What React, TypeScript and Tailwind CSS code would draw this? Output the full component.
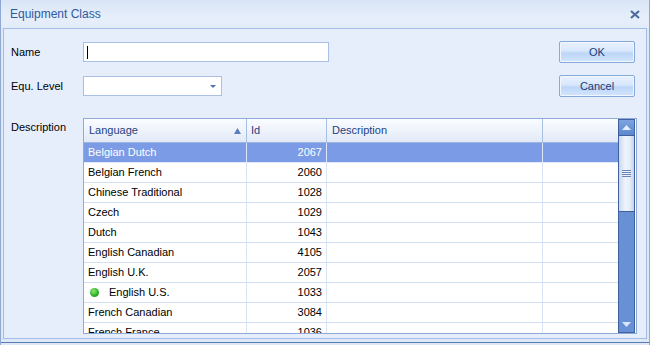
import React from "react";

const rows: { lang: string; id: string; dot?: boolean }[] = [
  { lang: "Belgian Dutch", id: "2067" },
  { lang: "Belgian French", id: "2060" },
  { lang: "Chinese Traditional", id: "1028" },
  { lang: "Czech", id: "1029" },
  { lang: "Dutch", id: "1043" },
  { lang: "English Canadian", id: "4105" },
  { lang: "English U.K.", id: "2057" },
  { lang: "English U.S.", id: "1033", dot: true },
  { lang: "French Canadian", id: "3084" },
  { lang: "French France", id: "1036" },
];

const font = { fontFamily: '"Liberation Sans", Arial, sans-serif' };

function Btn({ label }: { label: string }) {
  return (
    <div className="w-[76px] h-[22px] rounded-[2px] border border-[#86a9dc] bg-[linear-gradient(to_bottom,#e9f2fe_0%,#d7e7fc_45%,#bcd6f7_55%,#d3e5fc_100%)] flex items-center justify-center text-[11px] text-[#1b3b78] shadow-[inset_0_0_0_1px_#f2f7ff]">
      {label}
    </div>
  );
}

export default function App() {
  return (
    <div
      className="w-[650px] h-[345px] flex flex-col bg-[#dde7f6] border-l border-r border-[#8fa9d4] overflow-hidden"
      style={font}
    >
      {/* title bar */}
      <div className="h-[28px] shrink-0 flex items-center justify-between pl-[9px] pr-[9px] bg-[linear-gradient(to_bottom,#d9e5f6,#e6eefa_60%,#e3ecf9)]">
        <span className="text-[12px] text-[#2d5aa0]">Equipment Class</span>
        <svg width="10" height="9" viewBox="0 0 10 9">
          <path d="M1 1 L9 8 M9 1 L1 8" stroke="#4f6d9c" strokeWidth="2.2" />
        </svg>
      </div>
      {/* body panel */}
      <div className="h-[311px] shrink-0 mx-[2px] border border-[#a3bde6] bg-[#e7eefb] flex flex-col pl-[7px] pr-[8px] pt-[12px] text-[11px] text-black">
        <div className="flex items-center h-[22px]">
          <div className="w-[72px]">Name</div>
          <div className="w-[246px] h-[20px] bg-white border border-[#a9bfe3] flex items-center pl-[3px]">
            <div className="w-px h-[13px] bg-black" />
          </div>
          <div className="ml-auto mr-[3px]">
            <Btn label="OK" />
          </div>
        </div>
        <div className="flex items-center h-[22px] mt-[12px]">
          <div className="w-[72px]">Equ. Level</div>
          <div className="w-[139px] h-[20px] bg-white border border-[#a9bfe3] flex items-center justify-end pr-[5px]">
            <svg width="6" height="3" viewBox="0 0 6 3">
              <path d="M0 0 H6 L3 3 Z" fill="#4f74b8" />
            </svg>
          </div>
          <div className="ml-auto mr-[3px]">
            <Btn label="Cancel" />
          </div>
        </div>
        <div className="flex mt-[21px]">
          <div className="w-[72px] pt-[1px]">Description</div>
          {/* grid */}
          <div className="w-[554px] h-[216px] border border-[#8eaad8] bg-white flex overflow-hidden">
            <div className="flex-1 flex flex-col overflow-hidden">
              {/* header */}
              <div className="h-[24px] shrink-0 flex border-b border-[#9db7df] bg-[linear-gradient(to_bottom,#fafcff,#eef3fb_50%,#e2eaf7)] text-[#1d3f80]">
                <div className="w-[163px] shrink-0 border-r border-[#a7bfe4] flex items-center justify-between pl-[5px] pr-[5px]">
                  <span>Language</span>
                  <svg width="7" height="6" viewBox="0 0 7 6">
                    <path d="M3.5 0 L7 6 H0 Z" fill="#5b7dbd" />
                  </svg>
                </div>
                <div className="w-[80px] shrink-0 border-r border-[#a7bfe4] flex items-center pl-[4px]">Id</div>
                <div className="w-[216px] shrink-0 border-r border-[#a7bfe4] flex items-center pl-[5px]">Description</div>
                <div className="flex-1" />
              </div>
              {rows.map((r, i) => {
                const sel = i === 0;
                return (
                  <div
                    key={r.lang}
                    className={`h-[20px] shrink-0 flex border-b ${sel ? "bg-[#7c9be6] text-white border-[#e3ebf9]" : "border-[#d3e0f4]"}`}
                  >
                    <div className={`w-[163px] shrink-0 border-r flex items-center pl-[4px] ${sel ? "border-[#dfe8f8]" : "border-[#d9e5f6]"}`}>
                      {r.dot && (
                        <span className="w-[9px] h-[9px] rounded-full bg-[radial-gradient(circle_at_40%_35%,#8ee86a,#2fb22a_55%,#167d16)] ml-[2px] mr-[10px]" />
                      )}
                      <span>{r.lang}</span>
                    </div>
                    <div className={`w-[80px] shrink-0 border-r flex items-center justify-end pr-[4px] ${sel ? "border-[#dfe8f8]" : "border-[#d9e5f6]"}`}>
                      {r.id}
                    </div>
                    <div className={`w-[216px] shrink-0 border-r ${sel ? "border-[#dfe8f8]" : "border-[#d9e5f6]"}`} />
                    <div className="flex-1" />
                  </div>
                );
              })}
            </div>
            {/* scrollbar */}
            <div className="w-[17px] shrink-0 border border-[#3f609c] bg-[#6891d5] flex flex-col mr-[1px]">
              <div className="h-[16px] flex items-center justify-center bg-[linear-gradient(to_bottom,#7ea4e0,#5c87cf)] border-b border-[#3f609c]">
                <svg width="9" height="5" viewBox="0 0 9 5">
                  <path d="M4.5 0 L9 5 H0 Z" fill="#e6eefb" />
                </svg>
              </div>
              <div className="h-[76px] border-b border-[#3f609c] bg-[linear-gradient(to_right,#c9d7ee,#eef3fb_40%,#e8eef9_70%,#c3d2ec)] flex flex-col items-center justify-center gap-[1px]">
                <div className="w-[9px] h-px bg-[#6a86b8]" />
                <div className="w-[9px] h-px bg-[#6a86b8]" />
                <div className="w-[9px] h-px bg-[#6a86b8]" />
                <div className="w-[9px] h-px bg-[#6a86b8]" />
              </div>
              <div className="flex-1 flex items-end justify-center pb-[5px]">
                <svg width="9" height="5" viewBox="0 0 9 5">
                  <path d="M0 0 H9 L4.5 5 Z" fill="#dbe6f8" />
                </svg>
              </div>
            </div>
          </div>
        </div>
      </div>
      <div className="h-px shrink-0 bg-[#5b7bb5] mt-[3px]" />
    </div>
  );
}
